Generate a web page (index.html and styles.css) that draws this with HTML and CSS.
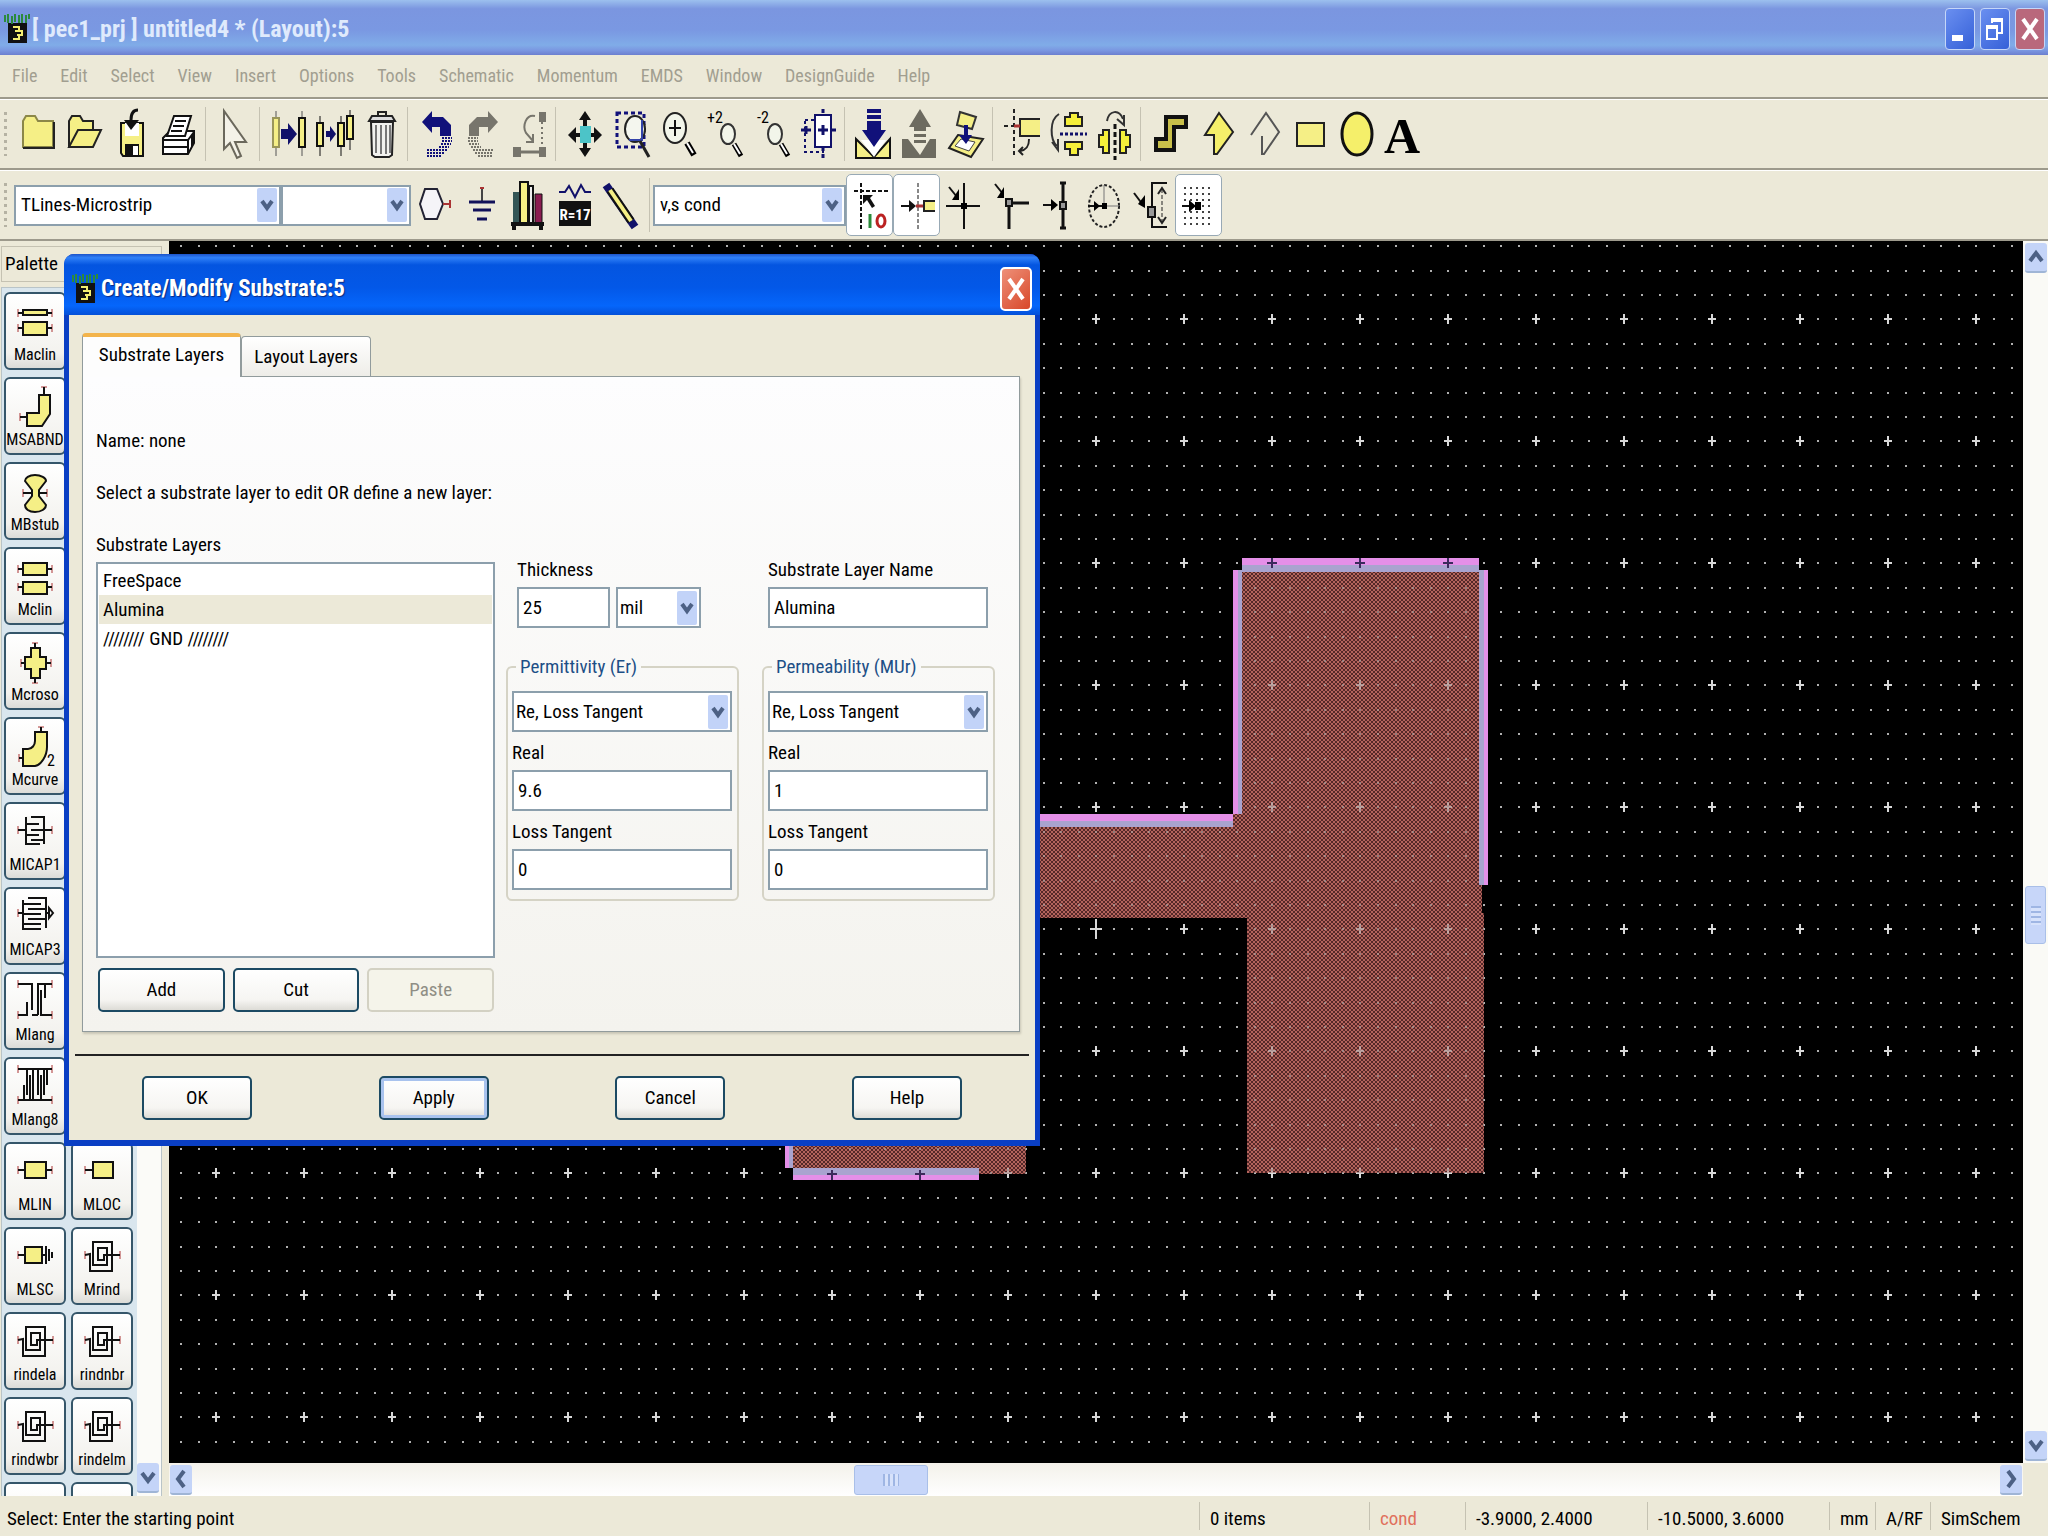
FILE: index.html
```html
<!DOCTYPE html>
<html lang="en">
<head>
    <meta charset="UTF-8">
    <meta name="viewport" content="width=device-width, initial-scale=1.0">
    <title>[ pec1_prj ] untitled4 * (Layout):5</title>
    <link rel="stylesheet" href="styles.css">
</head>
<body>

    <!-- Shared symbols -->
    <svg class="defs" width="0" height="0" aria-hidden="true">
        <symbol id="app" viewBox="0 0 26 32">
            <rect x="4" y="10" width="19" height="20" fill="#111"/>
            <path d="M1 2v7M4 1v9M8 3v8M11 1v8M15 2v8M18 1v9M22 2v8M25 1v5" stroke="#2c8a3c" stroke-width="2"/>
            <path d="M9 14h6v4h-4M12 18h6v4h-5M15 22v4H9" fill="none" stroke="#f4ee70" stroke-width="2"/>
        </symbol>
        <symbol id="lens" viewBox="0 0 40 52">
            <path d="M30 35l7 12" stroke="#000" stroke-width="6"/>
            <path d="M30 35l6 10" stroke="#fff" stroke-width="2"/>
            <ellipse cx="18" cy="20" rx="11" ry="15" fill="#f2f5ea" stroke="#222" stroke-width="2"/>
        </symbol>
        <symbol id="lens-small" viewBox="0 0 40 52">
            <path d="M30 36l7 12" stroke="#000" stroke-width="5"/>
            <path d="M30 36l6 10" stroke="#fff" stroke-width="2"/>
            <ellipse cx="24" cy="26" rx="7" ry="10" fill="#f2f5ea" stroke="#333" stroke-width="2"/>
        </symbol>
        <symbol id="spiral" viewBox="0 0 40 44">
            <path d="M3 14v8M38 14v8" stroke="#a33"/>
            <path d="M3 18l5-1v17h22V5H11v23h14V11H16v12h6v-5h16" fill="none" stroke="#111" stroke-width="2"/>
        </symbol>
        <symbol id="pins" viewBox="0 0 40 44">
            <path d="M3 14v8M37 14v8" stroke="#a33" stroke-width="1"/>
            <path d="M3 18h34" stroke="#111" stroke-width="2"/>
        </symbol>
    </svg>

    <header class="titlebar">
        <svg class="app-icon" viewBox="0 0 26 32"><use href="#app"/></svg>
        <h1>[ pec1_prj ] untitled4 * (Layout):5</h1>
        <div class="window-buttons">
            <button type="button" aria-label="Minimize"><svg viewBox="0 0 28 40"><path d="M6 29h11" stroke="#fff" stroke-width="6"/></svg></button>
            <button type="button" aria-label="Restore"><svg viewBox="0 0 28 40"><path d="M11 14v-3h10v13h-4M6 18h10v12H6z" fill="none" stroke="#fff" stroke-width="2"/><path d="M10 11h12M5 18h12" stroke="#fff" stroke-width="4"/></svg></button>
            <button type="button" class="close" aria-label="Close"><svg viewBox="0 0 28 40"><path d="M7 10l14 20M21 10L7 30" stroke="#fff" stroke-width="4"/></svg></button>
        </div>
    </header>

    <nav class="menubar">
        <button type="button">File</button>
        <button type="button">Edit</button>
        <button type="button">Select</button>
        <button type="button">View</button>
        <button type="button">Insert</button>
        <button type="button">Options</button>
        <button type="button">Tools</button>
        <button type="button">Schematic</button>
        <button type="button">Momentum</button>
        <button type="button">EMDS</button>
        <button type="button">Window</button>
        <button type="button">DesignGuide</button>
        <button type="button">Help</button>
    </nav>

    <!-- Main toolbar -->
    <div class="toolbar">
        <span class="grip"></span>
        <button type="button" class="tool" aria-label="New"><svg viewBox="0 0 40 52"><path d="M5 13l3-5h9l3 5h15v26H5z" fill="#f5ef86" stroke="#8b8748" stroke-width="2"/><path d="M5 40h31V14" fill="none" stroke="#222" stroke-width="2"/></svg></button>
        <button type="button" class="tool" aria-label="Open"><svg viewBox="0 0 40 52"><path d="M4 39V13l3-5h8l3 5h10v9" fill="#f5ef86" stroke="#222" stroke-width="2"/><path d="M4 39l9-17h23l-8 17z" fill="#f5ef86" stroke="#222" stroke-width="2"/></svg></button>
        <button type="button" class="tool" aria-label="Save"><svg viewBox="0 0 40 52"><path d="M9 15h22v33H11l-2-3z" fill="#f5ef86" stroke="#111" stroke-width="2"/><path d="M13 15h14v13H13z" fill="#fff"/><path d="M13 36h14v12H13z" fill="#111"/><path d="M21 38h5v9h-5z" fill="#fff"/><path d="M26 2c-5 0-7 4-7 10" fill="none" stroke="#111" stroke-width="3"/><path d="M12 12h15l-8 10z" fill="#111"/></svg></button>
        <button type="button" class="tool" aria-label="Print"><svg viewBox="0 0 40 52"><path d="M4 30l7-7h24v12l-6 11H4z" fill="#fff" stroke="#111" stroke-width="2"/><path d="M4 32h25l6-8M4 39h24M29 32v13M33 27v12" fill="none" stroke="#111" stroke-width="2"/><path d="M8 28l7-20h17l-6 20z" fill="#fff" stroke="#111" stroke-width="2"/><path d="M16 13h11M14 18h11M12 23h11" stroke="#111" stroke-width="2"/></svg></button>
        <span class="sep"></span>
        <button type="button" class="tool" aria-label="Pointer"><svg viewBox="0 0 40 52"><path d="M11 3v38l6-6 7 15 4-2-6-14h11z" fill="#f4f2e8" stroke="#6b685c" stroke-width="2"/></svg></button>
        <span class="sep"></span>
        <button type="button" class="tool" aria-label="Move"><svg viewBox="0 0 40 52"><path d="M9 3v45M35 3v45" stroke="#555"/><path d="M6 10h6v29H6z" fill="#f5ef86" stroke="#9a965a" stroke-width="2"/><path d="M32 10h6v29h-6z" fill="#f5ef86" stroke="#111" stroke-width="2"/><path d="M14 21h7v-6l9 11-9 11v-6h-7z" fill="#11116a"/></svg></button>
        <button type="button" class="tool" aria-label="Copy"><svg viewBox="0 0 40 52"><path d="M6 8v40M27 8v40M36 2v40" stroke="#111"/><path d="M3 15h6v23H3zM24 15h6v23h-6zM33 8h6v23h-6z" fill="#f5ef86" stroke="#111" stroke-width="2"/><path d="M12 23h4v-5l6 8-6 8v-5h-4z" fill="#11116a"/></svg></button>
        <button type="button" class="tool" aria-label="Delete"><svg viewBox="0 0 40 52"><path d="M10 14h22l-1 33-3 2H14l-3-2z" fill="#f1f1ee" stroke="#222" stroke-width="2"/><path d="M15 17v28M20 17v29M25 17v29M29 17v28" stroke="#777" stroke-width="2"/><path d="M8 13l3-5h20l3 5z" fill="#ddd" stroke="#222" stroke-width="2"/><path d="M17 7V4h8v3" fill="none" stroke="#222" stroke-width="2"/></svg></button>
        <span class="sep"></span>
        <button type="button" class="tool" aria-label="Undo"><svg viewBox="0 0 40 52"><path d="M7 14L17 3v6h11l8 8v11H25v-9h-8v6z" fill="#11117a"/><path d="M27 30h10M27 33h10M26 36h10M24 39h10M12 42h20M12 45h18M12 48h15" stroke="#11117a" stroke-width="2" stroke-dasharray="2 1"/></svg></button>
        <button type="button" class="tool" aria-label="Redo"><svg viewBox="0 0 40 52"><path d="M36 14L26 3v6H15l-8 8v11h10v-9h9v6z" fill="#77756c"/><path d="M6 30h10M6 33h10M7 36h10M9 39h10M11 42h20M13 45h18M16 48h15" stroke="#77756c" stroke-width="2" stroke-dasharray="2 1"/></svg></button>
        <button type="button" class="tool" aria-label="Rotate path"><svg viewBox="0 0 40 52"><path d="M30 4h7v10h-7zM4 39h8v10H4zM30 39h7v10h-7z" fill="#77756c"/><path d="M12 44h18" stroke="#77756c" stroke-width="3"/><path d="M33 14v25" stroke="#77756c" stroke-width="2" stroke-dasharray="2 3"/><path d="M26 8c-9-2-13 10-9 17l7 8m0-7v8h-7" fill="none" stroke="#77756c" stroke-width="2"/></svg></button>
        <span class="sep"></span>
        <button type="button" class="tool" aria-label="Pan"><svg viewBox="0 0 40 52"><path d="M22 3l6 9H16zM22 49l6-9H16zM5 27l8-8v16zM39 27l-8-8v16z" fill="#111"/><path d="M22 10v8M22 35v8M12 27h5M27 27h6" stroke="#111" stroke-width="4"/><path d="M17 18h11v17H17z" fill="#4cc4c8"/></svg></button>
        <button type="button" class="tool" aria-label="Zoom area"><svg viewBox="0 0 40 52"><path d="M7 5h27v34H7z" fill="none" stroke="#11117a" stroke-width="3" stroke-dasharray="4 3"/><ellipse cx="25" cy="21" rx="10" ry="13" fill="#f4f6ee" stroke="#222" stroke-width="2"/><path d="M19 32h13V12" fill="none" stroke="#3344aa" stroke-width="2"/><path d="M30 33l9 16" stroke="#222" stroke-width="3"/></svg></button>
        <button type="button" class="tool" aria-label="Zoom in"><svg viewBox="0 0 40 52"><use href="#lens"/><path d="M18 12v16M12 20h12" stroke="#111" stroke-width="2"/></svg></button>
        <button type="button" class="tool" aria-label="Zoom in by 2"><svg viewBox="0 0 40 52"><use href="#lens-small"/><text x="3" y="15" class="glyph">+2</text></svg></button>
        <button type="button" class="tool" aria-label="Zoom out by 2"><svg viewBox="0 0 40 52"><use href="#lens-small"/><text x="6" y="15" class="glyph">-2</text></svg></button>
        <button type="button" class="tool" aria-label="Pan to point"><svg viewBox="0 0 40 52"><path d="M7 12h18v32H7z" fill="none" stroke="#11116a" stroke-width="2" stroke-dasharray="3 3"/><path d="M17 7h16v32H17z" fill="#fff" stroke="#11116a" stroke-width="2"/><path d="M25 1v6M25 39v11" stroke="#11116a" stroke-width="3" stroke-dasharray="4 3"/><path d="M3 22h10M8 18v8M20 22h10M25 17v10M33 22h5" stroke="#11116a" stroke-width="3"/></svg></button>
        <span class="sep"></span>
        <button type="button" class="tool" aria-label="Push into"><svg viewBox="0 0 40 52"><path d="M4 31v19h34V31L22 49z" fill="#f5ef86" stroke="#111" stroke-width="2"/><path d="M9 32l13 17 12-17z" fill="#fff"/><path d="M15 1h14v4H15zM15 7h14v4H15zM15 13h14v9h5L22 39 10 22h5z" fill="#11117a"/></svg></button>
        <button type="button" class="tool" aria-label="Pop out"><svg viewBox="0 0 40 52"><path d="M3 31h6l12 16 10-16h6v19H3z" fill="#6d6b60"/><path d="M21 1l11 18h-5v4H15v-4h-5zM15 26h12v3H15zM15 32h12v3H15z" fill="#6d6b60"/></svg></button>
        <button type="button" class="tool" aria-label="Place"><svg viewBox="0 0 40 52"><path d="M14 4l16 5-4 12-15-4z" fill="#f5ef86" stroke="#333" stroke-width="2"/><path d="M12 27l25 4-12 18-22-9z" fill="#f5ef86" stroke="#222" stroke-width="2"/><path d="M15 31l14 3-6 9-14-5z" fill="#fff" stroke="#444"/><path d="M18 17v10h-5l7 9 6-9h-4V17z" fill="#11117a"/></svg></button>
        <span class="sep"></span>
        <button type="button" class="tool" aria-label="Rotate"><svg viewBox="0 0 40 52"><path d="M14 1v49M4 18h10" stroke="#222" stroke-width="2" stroke-dasharray="4 3"/><path d="M20 11h20v17H20z" fill="#f5ef86"/><path d="M40 11H20v17h20" fill="none" stroke="#222" stroke-width="2"/><path d="M14 18h6" stroke="#a33" stroke-width="3"/><path d="M29 31c0 8-3 11-9 12m3-4l-4 4 4 4" fill="none" stroke="#222" stroke-width="2"/></svg></button>
        <button type="button" class="tool" aria-label="Mirror X"><svg viewBox="0 0 40 52"><path d="M18 18v-9h5V5h8v4h4v9zM18 34v7h5v6h8v-6h4v-7z" fill="#f5ef3a" stroke="#222" stroke-width="2"/><path d="M13 26h27" stroke="#11116a" stroke-width="3" stroke-dasharray="3 2"/><path d="M12 6C2 12 3 32 10 38m-5-4l6 8V31" fill="none" stroke="#333" stroke-width="2"/></svg></button>
        <button type="button" class="tool" aria-label="Mirror Y"><svg viewBox="0 0 40 52"><path d="M15 22H9v5H5v12h4v6h6zM26 22h6v5h4v12h-4v6h-6z" fill="#f5ef3a" stroke="#222" stroke-width="2"/><path d="M21 16v36" stroke="#111" stroke-width="3" stroke-dasharray="5 3"/><path d="M13 13C15 2 25 1 29 11m-6 0l7 6V7" fill="none" stroke="#333" stroke-width="2"/></svg></button>
        <span class="sep"></span>
        <button type="button" class="tool" aria-label="Path"><svg viewBox="0 0 40 52"><path d="M8 42V31h10V9h20v10H26v23z" fill="#c9c04a" stroke="#111" stroke-width="4"/></svg></button>
        <button type="button" class="tool" aria-label="Polygon"><svg viewBox="0 0 40 52"><path d="M24 5l14 19-16 22h-3V27h-9z" fill="#f5ef6a" stroke="#222" stroke-width="2"/></svg></button>
        <button type="button" class="tool" aria-label="Polyline"><svg viewBox="0 0 40 52"><path d="M9 27L24 5l13 19-15 22h-2V28" fill="none" stroke="#555" stroke-width="2"/></svg></button>
        <button type="button" class="tool" aria-label="Rectangle"><svg viewBox="0 0 40 52"><path d="M8 15h27v23H8z" fill="#f5ef86" stroke="#222" stroke-width="2"/></svg></button>
        <button type="button" class="tool" aria-label="Circle"><svg viewBox="0 0 40 52"><ellipse cx="21" cy="26" rx="15" ry="21" fill="#f5ef6a" stroke="#111" stroke-width="3"/></svg></button>
        <button type="button" class="tool" aria-label="Text"><svg viewBox="0 0 40 52"><text x="19" y="45" class="big-a">A</text></svg></button>
    </div>

    <!-- Palette and layer toolbar -->
    <div class="toolbar">
        <span class="grip"></span>
        <select class="combo library" aria-label="Component palette"><option>TLines-Microstrip</option></select>
        <select class="combo history" aria-label="Component history"><option></option></select>
        <button type="button" class="tool" aria-label="Port"><svg viewBox="0 0 40 52"><path d="M10 10h12l6 15-6 15H10L5 25z" fill="#f5f4f8" stroke="#223" stroke-width="2"/><path d="M28 25h6M35 21v8" stroke="#a33" stroke-width="2"/></svg></button>
        <button type="button" class="tool" aria-label="Ground"><svg viewBox="0 0 40 52"><path d="M20 9v14" stroke="#444" stroke-width="2"/><path d="M18 9h4" stroke="#a33" stroke-width="2"/><path d="M7 23h26M11 31h18M15 40h10" stroke="#11115a" stroke-width="3"/></svg></button>
        <button type="button" class="tool" aria-label="Library"><svg viewBox="0 0 40 52"><path d="M4 13h7v32H4z" fill="#355"/><path d="M11 3h8v42h-8z" fill="#f5ef86" stroke="#111" stroke-width="2"/><path d="M20 7h4v38h-4z" fill="#eee" stroke="#111" stroke-width="2"/><path d="M26 15h7v30h-7z" fill="#8a1c50" stroke="#111"/><path d="M2 45h33M5 45v6M32 45v6" stroke="#111" stroke-width="4"/></svg></button>
        <button type="button" class="tool" aria-label="Values"><svg viewBox="0 0 40 52"><path d="M3 13h6l4-6 6 11 6-12 4 7h6" fill="none" stroke="#11116a" stroke-width="2"/><path d="M3 22h32v25H3z" fill="#111"/><text x="19" y="41" class="value">R=17</text></svg></button>
        <button type="button" class="tool" aria-label="Wire"><svg viewBox="0 0 40 52"><path d="M3 6l29 42" stroke="#11116a" stroke-width="8"/><path d="M7 11l21 31" stroke="#111" stroke-width="8"/><path d="M7 11l21 31" stroke="#f5ef86" stroke-width="4"/></svg></button>
        <span class="sep"></span>
        <select class="combo layer" aria-label="Entry layer"><option>v,s cond</option></select>
        <button type="button" class="tool pressed" aria-label="Snap enable"><svg viewBox="0 0 40 52"><path d="M11 4v47M4 12h35" stroke="#111" stroke-width="2" stroke-dasharray="4 2"/><path d="M13 16h10l-3 3 5 8-3 2-5-8-4 4z" fill="#111"/><path d="M20 35v14" stroke="#2a8a3a" stroke-width="3"/><ellipse cx="31" cy="42" rx="4" ry="6" fill="none" stroke="#b22" stroke-width="3"/></svg></button>
        <button type="button" class="tool pressed" aria-label="Pin snap"><svg viewBox="0 0 40 52"><path d="M21 4v46" stroke="#111" stroke-dasharray="4 2"/><path d="M4 27h9" stroke="#111" stroke-width="2"/><path d="M12 21l7 6-7 6z" fill="#111"/><path d="M19 27h7" stroke="#a33" stroke-width="3"/><path d="M38 22H27v10h11" fill="#f5ef86" stroke="#222" stroke-width="2"/></svg></button>
        <button type="button" class="tool" aria-label="Vertex snap"><svg viewBox="0 0 40 52"><path d="M20 4v46M2 27h34" stroke="#111" stroke-width="2"/><path d="M17 24h6v6h-6z"/><path d="M5 8l8 10" stroke="#111" stroke-width="2"/><path d="M15 10v11H8z"/></svg></button>
        <button type="button" class="tool" aria-label="Corner snap"><svg viewBox="0 0 40 52"><path d="M18 50V24h20" fill="none" stroke="#111" stroke-width="3"/><path d="M15 20h6v7h-6z" fill="#999" stroke="#111" stroke-width="2"/><path d="M4 5l8 10" stroke="#111" stroke-width="2"/><path d="M13 8v11H6z"/></svg></button>
        <button type="button" class="tool" aria-label="Midpoint snap"><svg viewBox="0 0 40 52"><path d="M25 4v45M22 4h6M22 49h6" stroke="#111" stroke-width="3"/><path d="M22 23h6v7h-6z" fill="#999" stroke="#111" stroke-width="2"/><path d="M5 26h10" stroke="#111" stroke-width="2"/><path d="M13 20l7 6-7 6z"/></svg></button>
        <button type="button" class="tool" aria-label="Center snap"><svg viewBox="0 0 40 52"><ellipse cx="19" cy="27" rx="15" ry="21" fill="none" stroke="#222" stroke-width="2" stroke-dasharray="3 2"/><path d="M19 6v21h15" fill="none" stroke="#777"/><path d="M3 27h14" stroke="#111" stroke-width="2"/><path d="M9 22l6 5-6 5zM17 24h5v6h-5z"/></svg></button>
        <button type="button" class="tool" aria-label="Edge snap"><svg viewBox="0 0 40 52"><path d="M35 4H20v44h15" fill="none" stroke="#111" stroke-width="2"/><path d="M16 28h7v10h-7z" fill="#999" stroke="#111" stroke-width="2"/><path d="M30 10v34" stroke="#222" stroke-dasharray="4 2"/><path d="M26 15l4-6 4 6M26 38l4 6 4-6" fill="none" stroke="#222" stroke-width="2"/><path d="M2 14l9 12" stroke="#111" stroke-width="2"/><path d="M13 16v13l-7-4z"/></svg></button>
        <button type="button" class="tool pressed" aria-label="Grid snap"><svg viewBox="0 0 40 52"><path d="M5 9h29M5 15h29M5 21h29M5 27h29M5 33h29M5 39h29M5 45h29" stroke="#444" stroke-width="2" stroke-dasharray="2 4"/><path d="M3 27h10" stroke="#111" stroke-width="2"/><path d="M10 21l7 6-7 6zM16 23h6v8h-6z"/></svg></button>
    </div>

    <main class="workspace">
        <aside class="palette">
            <h2>Palette</h2>
            <div class="palette-body">
                <div class="parts">
                    <button type="button" class="part"><svg viewBox="0 0 40 44"><path d="M3 7v8M37 7v8M3 22v8M37 22v8" stroke="#a33"/><path d="M3 11h34M3 26h34" stroke="#111" stroke-width="2"/><path d="M8 8h24v5H8zM8 20h24v13H8z" fill="#f5ef86" stroke="#111" stroke-width="2"/></svg>Maclin</button>
                    <button type="button" class="part"><svg viewBox="0 0 40 44"><path d="M5 26v8M26 0h6" stroke="#a33"/><path d="M5 30h6M29 0v8" stroke="#111" stroke-width="2"/><path d="M24 8h11v19l-8 12H12V26h12z" fill="#f5ef86" stroke="#111" stroke-width="2"/></svg>MSABND</button>
                    <button type="button" class="part"><svg viewBox="0 0 40 44"><path d="M8 17v8M32 17v8" stroke="#a33"/><path d="M8 21h24" stroke="#111" stroke-width="2"/><path d="M17 18l-7-9c0-3 4-6 10-6s11 3 11 6l-7 9v6l7 9c0 4-5 7-11 7s-10-3-10-7l7-9z" fill="#f5ef86" stroke="#111" stroke-width="2"/></svg>MBstub</button>
                    <button type="button" class="part"><svg viewBox="0 0 40 44"><path d="M3 8v8M37 8v8M3 26v8M37 26v8" stroke="#a33"/><path d="M3 12h34M3 30h34" stroke="#111" stroke-width="2"/><path d="M8 6h24v12H8zM8 25h24v12H8z" fill="#f5ef86" stroke="#111" stroke-width="2"/></svg>Mclin</button>
                    <button type="button" class="part"><svg viewBox="0 0 40 44"><path d="M6 17v8M36 17v8M17 1h6M17 41h6" stroke="#a33"/><path d="M6 21h30M20 1v40" stroke="#111" stroke-width="2"/><path d="M16 6h9v9h6v12h-6v9h-9v-9h-6V15h6z" fill="#f5ef86" stroke="#111" stroke-width="2"/></svg>Mcroso</button>
                    <button type="button" class="part"><svg viewBox="0 0 40 44"><path d="M4 27v8M23 0h6" stroke="#a33"/><path d="M4 31h6M26 0v6" stroke="#111" stroke-width="2"/><path d="M20 5h12v15c0 9-6 18-12 19H8V22h5c4 0 7-4 7-8z" fill="#f5ef86" stroke="#111" stroke-width="2"/><text x="32" y="39" class="glyph">2</text></svg>Mcurve</button>
                    <button type="button" class="part"><svg viewBox="0 0 40 44"><use href="#pins"/><path d="M11 4h18v28H11z" fill="#f7f7f4"/><path d="M16 5h13v27M11 5v27h14M11 12h13M16 18h13M11 23h13M16 28h13" fill="none" stroke="#111" stroke-width="2"/></svg>MICAP1</button>
                    <button type="button" class="part"><svg viewBox="0 0 40 44"><path d="M3 12v8" stroke="#a33"/><path d="M3 16h5M31 16h3M34 11v10l4-5z" fill="none" stroke="#111" stroke-width="2"/><path d="M13 1h18v30M8 3v29h18M8 7h18M13 12h18M8 17h18M13 22h18M8 27h18" fill="none" stroke="#111" stroke-width="2"/></svg>MICAP3</button>
                    <button type="button" class="part"><svg viewBox="0 0 40 44"><path d="M3 -2v8M37 -2v8M3 29v8M37 29v8" stroke="#a33"/><path d="M3 2h14v26M12 20v13H3M23 33H17M23 33V2h14M26 8v25h11M30 2v14" fill="none" stroke="#111" stroke-width="2"/></svg>Mlang</button>
                    <button type="button" class="part"><svg viewBox="0 0 40 44"><path d="M3 -2v8M37 -2v8M3 29v8M37 29v8" stroke="#a33"/><path d="M3 2h34M3 33h34M9 18v15M12 2v26M15 8v25M18 2v31M23 2v26M26 8v25M29 2v26M32 2v16" fill="none" stroke="#111" stroke-width="2"/></svg>Mlang8</button>
                    <button type="button" class="part"><svg viewBox="0 0 40 44"><use href="#pins"/><path d="M10 10h21v16H10z" fill="#f5ef86" stroke="#111" stroke-width="2"/></svg>MLIN</button>
                    <button type="button" class="part"><svg viewBox="0 0 40 44"><path d="M3 14v8" stroke="#a33"/><path d="M3 18h8" stroke="#111" stroke-width="2"/><path d="M11 10h20v16H11z" fill="#f5ef86" stroke="#111" stroke-width="2"/></svg>MLOC</button>
                    <button type="button" class="part"><svg viewBox="0 0 40 44"><path d="M3 14v8" stroke="#a33"/><path d="M3 18h28M31 9v18M34 12v12M37 15v6" stroke="#111" stroke-width="2"/><path d="M10 10h17v16H10z" fill="#f5ef86" stroke="#111" stroke-width="2"/></svg>MLSC</button>
                    <button type="button" class="part"><svg viewBox="0 0 40 44"><use href="#spiral"/></svg>Mrind</button>
                    <button type="button" class="part"><svg viewBox="0 0 40 44"><use href="#spiral"/></svg>rindela</button>
                    <button type="button" class="part"><svg viewBox="0 0 40 44"><use href="#spiral"/></svg>rindnbr</button>
                    <button type="button" class="part"><svg viewBox="0 0 40 44"><use href="#spiral"/></svg>rindwbr</button>
                    <button type="button" class="part"><svg viewBox="0 0 40 44"><use href="#spiral"/></svg>rindelm</button>
                    <button type="button" class="part" aria-label="More"></button>
                    <button type="button" class="part" aria-label="More"></button>
                </div>
                <div class="parts-scroll">
                    <button type="button" class="scroll-btn" aria-label="Scroll down"><svg viewBox="0 0 22 28"><path d="M5 10l6 8 6-8" fill="none" stroke="#4d6185" stroke-width="4"/></svg></button>
                </div>
            </div>
        </aside>

        <section class="view">
            <div class="view-row">
                <svg class="canvas" role="img" aria-label="Layout drawing">
                    <defs>
                        <pattern id="hatch" width="4" height="4" patternUnits="userSpaceOnUse">
                            <rect width="4" height="4" fill="#542828"/>
                            <rect width="2" height="2" fill="#b4645c"/>
                            <rect x="2" y="2" width="2" height="2" fill="#b4645c"/>
                        </pattern>
                        <pattern id="grid" x="41" y="72" width="88" height="122" patternUnits="userSpaceOnUse">
                            <path d="M6 1v10M2 6h8" stroke="#d8d8d8" stroke-width="2"/>
                            <path d="M23 6h2M41 6h2M58 6h2M76 6h2M5 31h2M23 31h2M41 31h2M58 31h2M76 31h2M5 55h2M23 55h2M41 55h2M58 55h2M76 55h2M5 80h2M23 80h2M41 80h2M58 80h2M76 80h2M5 104h2M23 104h2M41 104h2M58 104h2M76 104h2" stroke="#b0b0b0" stroke-width="2"/>
                        </pattern>
                    </defs>
                    <rect width="100%" height="100%" fill="#000"/>
                    <rect width="100%" height="100%" fill="url(#grid)"/>
                    <!-- copper, with the grid showing through -->
                    <path d="M860 585h204v-12h9V330h240v342h2v260h-237V677H860zM624 890h233v43H624z" fill="url(#hatch)"/>
                    <path d="M860 585h204v-12h9V330h240v342h2v260h-237V677H860zM624 890h233v43H624z" fill="url(#grid)" opacity=".6"/>
                    <!-- selected edges -->
                    <path d="M1073 317h237v7h-237zM1064 329h5v244h-5zM860 573h204v7H860zM1315 329h4v315h-4zM616 890h4v37h-4zM624 934h186v5H624z" fill="#e48fe8"/>
                    <path d="M1073 324h237v7h-237zM1069 329h4v244h-4zM860 580h204v6H860zM1310 329h5v315h-5zM620 890h4v37h-4zM624 927h186v7H624z" fill="#a9a3cf"/>
                    <path d="M1103 317v10M1098 322h10M1191 317v10M1186 322h10M1279 317v10M1274 322h10M663 929v10M658 933h10M751 929v10M746 933h10" stroke="#3b2a5c" stroke-width="2"/>
                    <path d="M927 678v20M921 688h12" stroke="#d8d8d8" stroke-width="2"/>
                </svg>
                <div class="scroll-v">
                    <button type="button" class="scroll-btn" aria-label="Scroll up"><svg viewBox="0 0 22 28"><path d="M5 18l6-8 6 8" fill="none" stroke="#4d6185" stroke-width="4"/></svg></button>
                    <span class="thumb"></span>
                    <button type="button" class="scroll-btn" aria-label="Scroll down"><svg viewBox="0 0 22 28"><path d="M5 10l6 8 6-8" fill="none" stroke="#4d6185" stroke-width="4"/></svg></button>
                </div>
            </div>
            <div class="scroll-h">
                <button type="button" class="scroll-btn" aria-label="Scroll left"><svg viewBox="0 0 22 28"><path d="M14 6l-6 8 6 8" fill="none" stroke="#4d6185" stroke-width="4"/></svg></button>
                <span class="thumb"></span>
                <button type="button" class="scroll-btn" aria-label="Scroll right"><svg viewBox="0 0 22 28"><path d="M8 6l6 8-6 8" fill="none" stroke="#4d6185" stroke-width="4"/></svg></button>
            </div>
        </section>

        <!-- Create/Modify Substrate -->
        <form class="dialog" role="dialog" aria-labelledby="dialog-title">
            <div class="dialog-title">
                <svg class="app-icon" viewBox="0 0 26 32"><use href="#app"/></svg>
                <h2 id="dialog-title">Create/Modify Substrate:5</h2>
                <button type="button" class="dialog-close" aria-label="Close"><svg viewBox="0 0 28 40"><path d="M7 10l14 20M21 10L7 30" stroke="#fff" stroke-width="4"/></svg></button>
            </div>
            <div class="dialog-body">
                <div class="tabs" role="tablist">
                    <button type="button" class="tab active" role="tab" aria-selected="true">Substrate Layers</button>
                    <button type="button" class="tab" role="tab" aria-selected="false">Layout Layers</button>
                </div>
                <div class="panel">
                    <p>Name: none</p>
                    <p>Select a substrate layer to edit OR define a new layer:</p>
                    <div class="columns">
                        <div class="layers">
                            <label for="layers">Substrate Layers</label>
                            <select id="layers" size="13">
                                <option>FreeSpace</option>
                                <option class="current">Alumina</option>
                                <option>//////// GND ////////</option>
                            </select>
                            <div class="layer-buttons">
                                <button type="button" class="btn">Add</button>
                                <button type="button" class="btn">Cut</button>
                                <button type="button" class="btn" disabled>Paste</button>
                            </div>
                        </div>
                        <div class="props">
                            <div class="field">
                                <label for="thickness">Thickness</label>
                                <div class="thickness">
                                    <input id="thickness" type="text" value="25">
                                    <select class="combo" aria-label="Thickness unit"><option>mil</option></select>
                                </div>
                            </div>
                            <div class="field">
                                <label for="layer-name">Substrate Layer Name</label>
                                <input id="layer-name" type="text" value="Alumina">
                            </div>
                            <fieldset>
                                <legend>Permittivity (Er)</legend>
                                <select class="combo" aria-label="Permittivity format"><option>Re, Loss Tangent</option></select>
                                <label for="er-real">Real</label>
                                <input id="er-real" type="text" value="9.6">
                                <label for="er-loss">Loss Tangent</label>
                                <input id="er-loss" type="text" value="0">
                            </fieldset>
                            <fieldset>
                                <legend>Permeability (MUr)</legend>
                                <select class="combo" aria-label="Permeability format"><option>Re, Loss Tangent</option></select>
                                <label for="mur-real">Real</label>
                                <input id="mur-real" type="text" value="1">
                                <label for="mur-loss">Loss Tangent</label>
                                <input id="mur-loss" type="text" value="0">
                            </fieldset>
                        </div>
                    </div>
                </div>
                <div class="dialog-actions">
                    <button type="button" class="btn">OK</button>
                    <button type="button" class="btn default">Apply</button>
                    <button type="button" class="btn">Cancel</button>
                    <button type="button" class="btn">Help</button>
                </div>
            </div>
        </form>
    </main>

    <footer class="statusbar">
        <span class="message">Select: Enter the starting point</span>
        <span class="items">0 items</span>
        <span class="cond">cond</span>
        <span class="coords">-3.9000, 2.4000</span>
        <span class="coords">-10.5000, 3.6000</span>
        <span class="unit">mm</span>
        <span class="mode">A/RF</span>
        <span class="sim">SimSchem</span>
    </footer>

</body>
</html>
```
FILE: styles.css
```css
:root {
    --face: #ece9d8;
    --line: #9d9a8c;
    --navy: #1c4a63;
}

* {
    box-sizing: border-box;
}

body {
    margin: 0;
    height: 100vh;
    display: flex;
    flex-direction: column;
    overflow: hidden;
    background: var(--face);
    color: #000;
    font-family: 'Roboto Condensed', Roboto, 'Liberation Sans', sans-serif;
    font-size: 19px;
    line-height: 24px;
}

button, input, select {
    font: inherit;
    color: inherit;
    margin: 0;
}

button {
    padding: 0;
    border: none;
    background: none;
}

h1, h2, p {
    margin: 0;
}

svg {
    display: block;
}

.defs {
    position: absolute;
}

.glyph {
    font-size: 16px;
}

.big-a {
    font-family: 'Liberation Serif', serif;
    font-size: 50px;
    font-weight: bold;
    text-anchor: middle;
}

.value {
    font-size: 15px;
    font-weight: bold;
    fill: #fff;
    text-anchor: middle;
}

/* Main window title */
.titlebar {
    height: 55px;
    padding: 2px 3px 0 4px;
    display: flex;
    align-items: center;
    background: linear-gradient(#9cc0ee, #7b96e0 16%, #7a98e2 55%, #80ace8 82%, #7a96e0 92%, #6c7fcf);
}

.titlebar h1 {
    flex: 1;
    margin-left: 2px;
    font-size: 24px;
    color: #dfeafc;
}

.app-icon {
    width: 26px;
    height: 32px;
}

.window-buttons {
    display: flex;
    gap: 5px;
}

.window-buttons button {
    width: 30px;
    height: 42px;
    border: 1px solid #c5d6f8;
    border-radius: 4px;
    background: linear-gradient(135deg, #6a8ff0, #3560d8);
}

.window-buttons .close {
    background: #b9687c;
}

.menubar {
    height: 44px;
    padding: 0 12px;
    display: flex;
    align-items: center;
    gap: 23px;
    border-bottom: 2px solid var(--line);
    color: #a19e90;
    font-size: 18px;
}

/* Toolbars */
.toolbar {
    height: 71px;
    padding-left: 4px;
    display: flex;
    align-items: center;
    border-top: 1px solid #fff;
    border-bottom: 2px solid var(--line);
}

.grip {
    width: 3px;
    height: 44px;
    margin-right: 7px;
    background: repeating-linear-gradient(#b5b2a3 0 3px, transparent 3px 7px);
}

.tool {
    width: 47px;
    height: 62px;
    display: flex;
    align-items: center;
    justify-content: center;
    border: 1px solid transparent;
    border-radius: 5px;
}

.tool svg {
    width: 40px;
    height: 52px;
    overflow: visible;
}

.tool.pressed {
    background: #fff;
    border-color: #98a9b5;
}

.sep {
    width: 1px;
    height: 54px;
    margin: 0 3px;
    background: #c5c2b2;
}

input, .combo {
    width: 100%;
    height: 41px;
    padding: 0 4px;
    border: 2px solid #8c9fac;
    border-radius: 0;
    background: #fff;
}

.combo {
    appearance: none;
    padding: 0 24px 0 2px;
    background: #fff url("data:image/svg+xml,%3Csvg xmlns='http://www.w3.org/2000/svg' width='22' height='34'%3E%3Crect width='20' height='34' rx='2' fill='%23c2d3f8'/%3E%3Cpath d='M5 13l5 7 5-7' fill='none' stroke='%234d6185' stroke-width='4'/%3E%3C/svg%3E") no-repeat right center;
}

.toolbar .combo {
    padding-left: 5px;
}

.combo.library { width: 267px; }
.combo.history { width: 130px; }
.combo.layer { width: 193px; }

/* Workspace */
.workspace {
    position: relative;
    flex: 1;
    min-height: 0;
    display: flex;
}

.palette {
    width: 169px;
    padding: 5px 7px 0 1px;
    display: flex;
    flex-direction: column;
}

.palette h2 {
    height: 36px;
    padding: 5px 3px;
    border: 1px solid #c5c2b2;
    font-size: 19px;
    font-weight: normal;
}

.palette-body {
    flex: 1;
    min-height: 0;
    margin-top: 5px;
    display: flex;
    overflow: hidden;
    border: 1px solid #b9c4c8;
    border-bottom: none;
    background: #d9e6ee;
}

.parts {
    flex: 1;
    padding: 4px 2px;
    display: grid;
    grid-template-columns: 62px 62px;
    grid-auto-rows: 78px;
    gap: 7px 5px;
}

.part {
    display: flex;
    flex-direction: column;
    align-items: center;
    padding-top: 8px;
    border: 2px solid #35566a;
    border-radius: 6px;
    background: linear-gradient(#fff, #f3f2ee 80%, #dcdcd8);
    font-size: 16px;
    line-height: 18px;
}

/* the upper rows only have one part each */
.part:nth-child(-n+11) {
    grid-column: 1;
}

.part svg {
    width: 40px;
    height: 44px;
    overflow: visible;
}

.parts-scroll {
    width: 24px;
    display: flex;
    align-items: flex-end;
    padding: 0 0 3px;
    background: #fbfbf8;
}

.scroll-btn {
    width: 22px;
    height: 30px;
    flex: none;
    border-radius: 3px;
    background: #c4d4f8;
    border-bottom: 2px solid #9fb5d6;
}

.scroll-btn svg {
    width: 100%;
    height: 28px;
}

.view {
    flex: 1;
    min-width: 0;
    display: flex;
    flex-direction: column;
}

.view-row {
    flex: 1;
    min-height: 0;
    display: flex;
}

.canvas {
    flex: 1;
    min-width: 0;
    height: 100%;
    shape-rendering: crispEdges;
}

.scroll-v {
    width: 25px;
    padding: 2px 1px;
    display: flex;
    flex-direction: column;
    align-items: center;
    justify-content: space-between;
    background: #fafaf6;
}

.scroll-v .thumb {
    width: 21px;
    height: 58px;
    margin-top: 126px;
    border: 1px solid #a9bfe8;
    border-radius: 3px;
    background: repeating-linear-gradient(#9fb6e4 0 2px, #d7e2fb 2px 5px) center / 10px 19px no-repeat #c7d6f9;
}

.scroll-h {
    height: 33px;
    margin-right: 25px;
    padding: 2px 1px;
    display: flex;
    align-items: center;
    justify-content: space-between;
    background: linear-gradient(#f3f1ea, #fff);
}

.scroll-h .thumb {
    width: 74px;
    height: 30px;
    margin-right: 410px;
    border: 1px solid #a9bfe8;
    border-radius: 3px;
    background: repeating-linear-gradient(90deg, #9fb6e4 0 2px, #d7e2fb 2px 5px) center / 16px 12px no-repeat #c7d6f9;
}

/* Substrate dialog */
.dialog {
    position: absolute;
    left: 64px;
    top: 13px;
    width: 976px;
    padding: 0 5px 6px;
    border-radius: 10px 10px 0 0;
    background: #0a3fc4;
}

.dialog-title {
    height: 61px;
    margin: 0 -5px;
    padding: 8px 8px 0;
    display: flex;
    align-items: center;
    border-radius: 10px 10px 0 0;
    background: linear-gradient(#1c53c8, #2f80f8 6%, #0455e0 18%, #0358e8 55%, #0566fb 85%, #0450d8);
}

.dialog-title h2 {
    flex: 1;
    margin-left: 3px;
    font-size: 23px;
    color: #fff;
    text-shadow: 1px 1px 1px #0a2a80;
}

.dialog-close {
    width: 32px;
    height: 44px;
    border: 2px solid #fff;
    border-radius: 5px;
    background: linear-gradient(135deg, #ee9078, #d8482a);
}

.dialog-body {
    padding: 18px 6px 20px;
    background: var(--face);
}

.tabs {
    display: flex;
    align-items: flex-end;
    margin-left: 7px;
}

.tab {
    height: 40px;
    width: 130px;
    border: 1px solid #919b9c;
    border-bottom: none;
    border-radius: 4px 4px 0 0;
    background: linear-gradient(#fff, #eeede8);
}

.tab.active {
    width: 159px;
    height: 44px;
    margin-bottom: -1px;
    padding-bottom: 4px;
    border-top: 4px solid #f3b44c;
    background: #fdfdfd;
    z-index: 1;
}

.panel {
    height: 656px;
    margin: 0 9px 0 7px;
    padding: 52px 24px 0 13px;
    border: 1px solid #919b9c;
    box-shadow: 1px 2px 2px #c9c6b6;
    background: linear-gradient(#fdfdfe, #f4f3ee);
}

.panel p {
    margin-bottom: 28px;
}

.columns {
    display: flex;
    gap: 11px;
}

.layers {
    width: 399px;
}

label {
    display: block;
}

.layers label {
    margin-bottom: 5px;
}

.layers select {
    width: 100%;
    height: 396px;
    padding: 2px 1px;
    border: 2px solid #8c9fac;
    border-radius: 0;
    background: #fff;
    overflow: hidden;
}

.layers option {
    min-height: 29px;
    padding: 3px 4px 1px;
    line-height: 25px;
}

.layers .current {
    background: var(--face);
}

.layer-buttons {
    display: flex;
    gap: 8px;
    margin: 9px 1px 0 2px;
}

.btn {
    flex: 1;
    height: 44px;
    border: 2px solid var(--navy);
    border-radius: 5px;
    background: linear-gradient(#fff, #f6f5f2 75%, #dddcd6);
}

.btn:disabled {
    border-color: #d3d1c3;
    background: #f5f4ea;
    color: #8f8e85;
}

.btn.default {
    box-shadow: inset 0 0 0 3px #a9c3ee;
}

.props {
    flex: 1;
    padding-top: 25px;
    display: grid;
    grid-template-columns: 1fr 1fr;
    grid-template-rows: auto 1fr;
    align-content: start;
    gap: 27px 23px;
}

.field {
    padding: 0 7px 0 6px;
}

.field:first-child {
    padding-left: 11px;
}

.field label {
    margin-bottom: 5px;
}

.thickness {
    display: flex;
    gap: 6px;
}

.thickness input {
    width: 93px;
}

.thickness .combo {
    width: 85px;
}

fieldset {
    min-width: 0;
    margin: 0;
    padding: 12px 5px 9px 4px;
    border: 2px solid #d5d3c5;
    border-radius: 6px;
    align-self: start;
}

fieldset label {
    margin: 9px 0 5px;
}

legend {
    margin-left: 4px;
    padding: 0 4px;
    color: #1d4f86;
}

.dialog-actions {
    margin-top: 22px;
    padding: 20px 67px 0;
    display: flex;
    justify-content: space-between;
    border-top: 2px solid #222;
}

.dialog-actions .btn {
    flex: none;
    width: 110px;
}

/* Status bar */
.statusbar {
    height: 40px;
    padding: 6px 0;
    display: flex;
    background: var(--face);
}

.statusbar span {
    padding: 5px 0 0 10px;
    border-left: 1px solid #c5c2b2;
}

.statusbar .message {
    flex: 1;
    padding-left: 7px;
    border-left: none;
}

.statusbar .items { width: 170px; }
.statusbar .cond { width: 96px; color: #e0705c; }
.statusbar .coords { width: 182px; }
.statusbar .unit { width: 46px; }
.statusbar .mode { width: 55px; }
.statusbar .sim { width: 118px; }
```
